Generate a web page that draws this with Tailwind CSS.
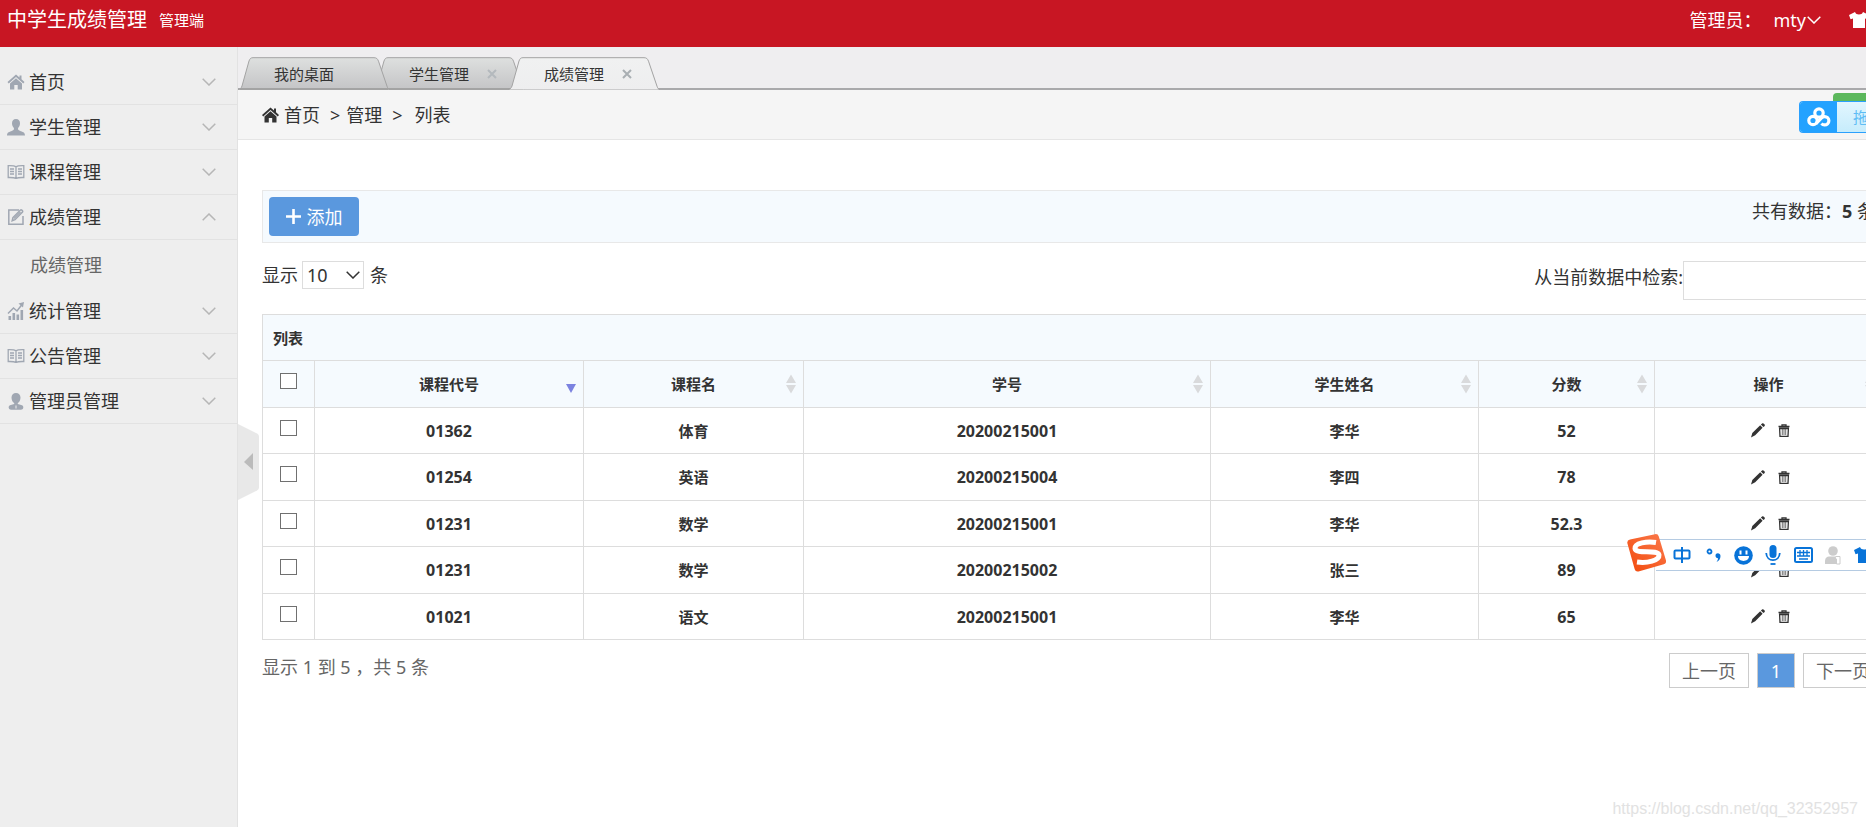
<!DOCTYPE html>
<html lang="zh-CN">
<head>
<meta charset="utf-8">
<title>中学生成绩管理</title>
<script src="https://cdn.jsdelivr.net/npm/@tailwindcss/browser@4"></script>
</head>
<body class="relative h-screen overflow-hidden bg-white font-['Noto_Sans','Noto_Sans_CJK_SC',sans-serif] text-[18px] leading-6 text-[#333]">
<svg class="absolute h-0 w-0" aria-hidden="true">
  <defs>
    <linearGradient id="tab-off" x1="0" y1="0" x2="0" y2="1"><stop offset="0" stop-color="#dee0df"/><stop offset="1" stop-color="#c4c4c6"/></linearGradient>
    <linearGradient id="tab-on" x1="0" y1="0" x2="0" y2="1"><stop offset="0" stop-color="#f0f1f1"/><stop offset="1" stop-color="#eeeeef"/></linearGradient>
    <linearGradient id="logo-fill" x1="1" y1="0" x2="0" y2="1"><stop offset="0" stop-color="#fb7a4c"/><stop offset="1" stop-color="#f24a0c"/></linearGradient>
    <symbol id="home" viewBox="0 0 17 16"><path d="M8.500.5 0 8l1.200 1.400L8.500 3l7.300 6.400L17 8l-3-2.700V1.500h-2v2.100z" fill="currentColor"/><path d="M8.500 4.300 2.500 9.600V15.500H6.800V11H10.200V15.500H14.500V9.600z" fill="currentColor"/></symbol>
    <symbol id="user" viewBox="0 0 18 17"><path d="M9 0C6.300 0 5 1.900 5 4.300c0 2 .8 3.600 1.900 4.600.3 1.500-.2 2.100-1.800 2.800C2.500 12.800 0 13.200 0 16.500h18c0-3.300-2.500-3.700-5.100-4.800-1.600-.7-2.100-1.300-1.800-2.800C12.200 7.900 13 6.300 13 4.300 13 1.900 11.700 0 9 0z" fill="currentColor"/></symbol>
    <symbol id="admin" viewBox="0 0 18 17"><path d="M9 0C6.300 0 4.500 1.900 4.500 4.600c0 2.500 1.200 4.900 2.700 5.500v1L3 12.300c-1.200.5-1.600 1.700-1.200 2.800.3 1 1 1.600 2.200 1.600h10c1.200 0 1.900-.6 2.200-1.600.4-1.100 0-2.300-1.200-2.800l-4.200-1.200v-1c1.500-.6 2.700-3 2.700-5.500C13.500 1.900 11.700 0 9 0z" fill="currentColor"/><path d="M8.500 12.500h1v3h-1z" fill="#eee"/></symbol>
    <symbol id="book" viewBox="0 0 17 14"><path d="M8.500 1.800C6.800.5 4 .6.700.7v11.800c3.300-.1 6.100-.1 7.800 1 1.700-1.100 4.500-1.100 7.800-1V.7C13 .6 10.200.5 8.500 1.800zM8.500 2v11M2.500 4h4M2.500 6.500h4M2.500 9h4M10.500 4h4M10.500 6.500h4M10.500 9h4" fill="none" stroke="currentColor" stroke-width="1.300"/></symbol>
    <symbol id="edit" viewBox="0 0 16 16"><path d="M11 1H.8v14.200h14.200V7" fill="none" stroke="currentColor" stroke-width="1.500"/><path d="M5 8.500 12.500 1c.8-.7 2.700 1 2 2L7 10.700l-2.800 1z" fill="none" stroke="currentColor" stroke-width="1.500"/><path d="M6 9.500 12.500 3" stroke="currentColor" stroke-width="1.200"/></symbol>
    <symbol id="chart" viewBox="0 0 17 18"><path d="M1 14h2.600v4H1zM5 11h2.600v7H5zM9 12.500h2.600V18H9zM13 8h2.600v10H13z" fill="currentColor"/><path d="M.5 11.500 6 6l3.500 3L14.500 2.500" fill="none" stroke="currentColor" stroke-width="1.500"/><path d="M11 1.500 16.500 0l-1 5.500z" fill="currentColor"/></symbol>
    <symbol id="down" viewBox="0 0 14 8"><path d="m.7.700 6.300 6.300 6.300-6.300" fill="none" stroke="currentColor" stroke-width="1.500"/></symbol>
    <symbol id="shirt" viewBox="0 0 20 16"><path d="M6 0 0 3l1.500 4.200L4 6.500V16h12V6.500l2.500.7L20 3l-6-3c-.8 1.800-2 2.500-4 2.500S6.800 1.800 6 0z" fill="currentColor"/></symbol>
    <symbol id="close" viewBox="0 0 10 10"><path d="m1 1 8 8m0-8L1 9" stroke="currentColor" stroke-width="2"/></symbol>
    <symbol id="sort" viewBox="0 0 10 20"><path d="M5 .5 10 9H0zM0 11h10l-5 8.500z" fill="#d9dadc"/></symbol>
    <symbol id="pencil" viewBox="0 0 14 15"><path d="M0 14.500 1.300 10 9.200 2.200l2.400 2.500L4.200 12.300zM9.900 1.500l1.200-1.100c1.200-.8 3.300 1.100 2.600 2.500l-1.300 1.200z" fill="currentColor"/></symbol>
    <symbol id="trash" viewBox="0 0 12 13"><path d="M.5 2.500h11M4 2V.8h4V2M1.600 4.500l.4 7.800h8l.4-7.800z" fill="none" stroke="currentColor" stroke-width="1.300"/><path d="M1 3.700h10M4.300 5v6M6 5v6M7.700 5v6" fill="none" stroke="currentColor" stroke-width=".7"/></symbol>
    <symbol id="tab-shape" viewBox="0 0 152 33"><path d="M0 32.500c2 0 3-1 4-3.500L11 4C12 1.500 12.800.7 15 .7h121c2.500 0 3.500 1 4.500 3.500l8.500 25c.8 2.300 1.500 3.300 3 3.300"/></symbol>
  </defs>
</svg>

<div class="flex h-full w-[calc(100%+40px)] flex-col">
  <header class="flex h-[47px] shrink-0 items-start bg-[#c81623] pt-2 pl-[7px] text-white">
    <h1 class="text-[20px]">中学生成绩管理</h1>
    <span class="ml-3 text-[15px]">管理端</span>
    <div class="ml-auto flex items-center pr-[37px]">
      <span>管理员：</span>
      <button type="button" class="ml-3 flex items-center gap-px">mty<svg class="h-2 w-3.5"><use href="#down"/></svg></button>
      <button type="button" aria-label="换肤" class="ml-7"><svg class="h-4 w-5"><use href="#shirt"/></svg></button>
    </div>
  </header>

  <div class="flex min-h-0 flex-1">
    <aside class="w-[238px] shrink-0 border-r border-[#e2e2e2] bg-[#eee] pt-[13px]">
      <nav>
        <button type="button" class="flex h-[45px] w-full items-center border-b border-[#e2e2e2] pr-[21px] pl-[7px]"><svg class="mr-1 h-4 w-[18px] text-[#a0a7b2]"><use href="#home"/></svg>首页<svg class="ml-auto h-2 w-3.5 text-[#b6b6b6]"><use href="#down"/></svg></button>
        <button type="button" class="flex h-[45px] w-full items-center border-b border-[#e2e2e2] pr-[21px] pl-[7px]"><svg class="mr-1 h-[17px] w-[18px] text-[#a0a7b2]"><use href="#user"/></svg>学生管理<svg class="ml-auto h-2 w-3.5 text-[#b6b6b6]"><use href="#down"/></svg></button>
        <button type="button" class="flex h-[45px] w-full items-center border-b border-[#e2e2e2] pr-[21px] pl-[7px]"><svg class="mr-1 h-3.5 w-[18px] text-[#a0a7b2]"><use href="#book"/></svg>课程管理<svg class="ml-auto h-2 w-3.5 text-[#b6b6b6]"><use href="#down"/></svg></button>
        <button type="button" aria-expanded="true" class="flex h-[45px] w-full items-center border-b border-[#e2e2e2] pr-[21px] pl-[7px]"><svg class="mr-1 h-4 w-[18px] text-[#a0a7b2]"><use href="#edit"/></svg>成绩管理<svg class="ml-auto h-2 w-3.5 rotate-180 text-[#b6b6b6]"><use href="#down"/></svg></button>
        <a href="#" class="flex h-[49px] items-center pl-[30px] text-[#666]">成绩管理</a>
        <button type="button" class="flex h-[45px] w-full items-center border-b border-[#e2e2e2] pr-[21px] pl-[7px]"><svg class="mr-1 h-[18px] w-[18px] text-[#a0a7b2]"><use href="#chart"/></svg>统计管理<svg class="ml-auto h-2 w-3.5 text-[#b6b6b6]"><use href="#down"/></svg></button>
        <button type="button" class="flex h-[45px] w-full items-center border-b border-[#e2e2e2] pr-[21px] pl-[7px]"><svg class="mr-1 h-3.5 w-[18px] text-[#a0a7b2]"><use href="#book"/></svg>公告管理<svg class="ml-auto h-2 w-3.5 text-[#b6b6b6]"><use href="#down"/></svg></button>
        <button type="button" class="flex h-[45px] w-full items-center border-b border-[#e2e2e2] pr-[21px] pl-[7px]"><svg class="mr-1 h-[17px] w-[18px] text-[#a0a7b2]"><use href="#admin"/></svg>管理员管理<svg class="ml-auto h-2 w-3.5 text-[#b6b6b6]"><use href="#down"/></svg></button>
      </nav>
    </aside>

    <main class="min-w-0 flex-1">
      <div class="h-[43px] border-b-2 border-[#a9a9ab] bg-[#efeef0] pt-[10px]">
        <ul class="flex text-[15px]">
          <li class="relative z-10 h-[33px] w-[152px]"><svg class="absolute inset-0 h-full w-full fill-[url(#tab-off)] stroke-[#a3a3a3]"><use href="#tab-shape"/><path d="M2 32h148" stroke-width="2"/></svg><a href="#" class="relative flex h-full items-center pl-9">我的桌面</a></li>
          <li class="relative -ml-[17px] h-[33px] w-[152px]"><svg class="absolute inset-0 h-full w-full fill-[url(#tab-off)] stroke-[#a3a3a3]"><use href="#tab-shape"/><path d="M2 32h148" stroke-width="2"/></svg><div class="relative flex h-full items-center pl-9"><a href="#">学生管理</a><button type="button" aria-label="关闭" class="ml-[18px] text-[#b4b9bd]"><svg class="h-2.5 w-2.5"><use href="#close"/></svg></button></div></li>
          <li class="relative z-20 -ml-[17px] h-[33px] w-[152px]"><svg class="absolute inset-0 h-full w-full fill-[url(#tab-on)] stroke-[#a3a3a3]"><use href="#tab-shape"/></svg><div class="relative flex h-full items-center pl-9"><a href="#">成绩管理</a><button type="button" aria-label="关闭" class="ml-[18px] text-[#a9afb3]"><svg class="h-2.5 w-2.5"><use href="#close"/></svg></button></div></li>
        </ul>
      </div>

      <nav class="flex h-[50px] items-center border-b border-[#e5e5e5] bg-[#f5f5f5] pl-6">
        <svg class="mr-[5px] h-4 w-[17px]"><use href="#home"/></svg>
        <a href="#">首页</a><span class="ml-2.5">&gt;</span><span class="ml-1.5">管理</span><span class="ml-2.5">&gt;</span><span class="ml-3">列表</span>
      </nav>

      <div class="px-6 pt-[50px]">
        <div class="flex h-[53px] items-start justify-between border border-[#e8e8e8] bg-[#f5fafe] p-1.5">
          <button type="button" class="flex h-[39px] w-[90px] items-center justify-center gap-1.5 rounded bg-[#5a98de] text-white"><svg class="h-[15px] w-[15px]" viewBox="0 0 15 15"><path d="M7.500 0v15M0 7.500h15" stroke="currentColor" stroke-width="2.600"/></svg>添加</button>
          <span class="pt-0.5">共有数据：<strong>5</strong> 条</span>
        </div>

        <div class="mt-[18px] flex items-start justify-between">
          <label class="flex h-7 items-center">显示
            <span class="relative mr-1.5 ml-1 block">
              <select class="block h-7 w-[62px] appearance-none border border-[#ddd] bg-white pl-1 leading-6"><option>10</option><option>25</option><option>50</option></select>
              <svg class="pointer-events-none absolute top-2.5 right-1 h-2 w-3.5"><use href="#down"/></svg>
            </span>条</label>
          <label class="flex items-start"><span class="pt-1">从当前数据中检索:</span><input type="search" class="h-[39px] w-[199px] border border-[#ddd] bg-white"></label>
        </div>

        <table class="mt-3.5 w-full table-fixed border-collapse text-center text-[15px] font-bold">
          <colgroup><col class="w-[52px]"><col class="w-[269px]"><col class="w-[220px]"><col class="w-[407px]"><col class="w-[268px]"><col class="w-[176px]"><col class="w-[228px]"></colgroup>
          <thead class="bg-[#f5fafe]">
            <tr class="h-[46px]"><th colspan="7" class="border border-[#ddd] pl-2.5 text-left">列表</th></tr>
            <tr class="h-[47px]">
              <th class="border border-[#ddd] pb-1.5"><input type="checkbox" aria-label="全选" class="mx-auto block h-4 w-[17px] appearance-none border border-[#707070] bg-white"></th>
              <th class="relative border border-[#ddd]"><button type="button" class="font-bold">课程代号</button><svg class="absolute right-[7px] bottom-3.5 h-[9px] w-2.5" viewBox="0 0 10 9"><path d="M0 0h10L5 9z" fill="#7b82e0"/></svg></th>
              <th class="relative border border-[#ddd]"><button type="button" class="font-bold">课程名</button><svg class="absolute top-[13px] right-[7px] h-5 w-2.5"><use href="#sort"/></svg></th>
              <th class="relative border border-[#ddd]"><button type="button" class="font-bold">学号</button><svg class="absolute top-[13px] right-[7px] h-5 w-2.5"><use href="#sort"/></svg></th>
              <th class="relative border border-[#ddd]"><button type="button" class="font-bold">学生姓名</button><svg class="absolute top-[13px] right-[7px] h-5 w-2.5"><use href="#sort"/></svg></th>
              <th class="relative border border-[#ddd]"><button type="button" class="font-bold">分数</button><svg class="absolute top-[13px] right-[7px] h-5 w-2.5"><use href="#sort"/></svg></th>
              <th class="relative border border-[#ddd]"><button type="button" class="font-bold">操作</button><svg class="absolute top-[13px] right-[7px] h-5 w-2.5"><use href="#sort"/></svg></th>
            </tr>
          </thead>
          <tbody>
            <tr class="odd:h-[46px] even:h-[47px]">
              <td class="border border-[#ddd] pb-1.5"><input type="checkbox" aria-label="选择" class="mx-auto block h-4 w-[17px] appearance-none border border-[#707070] bg-white"></td>
              <td class="border border-[#ddd] text-[16px]">01362</td><td class="border border-[#ddd]">体育</td><td class="border border-[#ddd] text-[16px]">20200215001</td><td class="border border-[#ddd]">李华</td><td class="border border-[#ddd] text-[16px]">52</td>
              <td class="border border-[#ddd]"><div class="flex items-center justify-center gap-[13px] pl-1"><button type="button" aria-label="编辑"><svg class="h-[15px] w-3.5"><use href="#pencil"/></svg></button><button type="button" aria-label="删除"><svg class="h-[13px] w-3"><use href="#trash"/></svg></button></div></td>
            </tr>
            <tr class="odd:h-[46px] even:h-[47px]">
              <td class="border border-[#ddd] pb-1.5"><input type="checkbox" aria-label="选择" class="mx-auto block h-4 w-[17px] appearance-none border border-[#707070] bg-white"></td>
              <td class="border border-[#ddd] text-[16px]">01254</td><td class="border border-[#ddd]">英语</td><td class="border border-[#ddd] text-[16px]">20200215004</td><td class="border border-[#ddd]">李四</td><td class="border border-[#ddd] text-[16px]">78</td>
              <td class="border border-[#ddd]"><div class="flex items-center justify-center gap-[13px] pl-1"><button type="button" aria-label="编辑"><svg class="h-[15px] w-3.5"><use href="#pencil"/></svg></button><button type="button" aria-label="删除"><svg class="h-[13px] w-3"><use href="#trash"/></svg></button></div></td>
            </tr>
            <tr class="odd:h-[46px] even:h-[47px]">
              <td class="border border-[#ddd] pb-1.5"><input type="checkbox" aria-label="选择" class="mx-auto block h-4 w-[17px] appearance-none border border-[#707070] bg-white"></td>
              <td class="border border-[#ddd] text-[16px]">01231</td><td class="border border-[#ddd]">数学</td><td class="border border-[#ddd] text-[16px]">20200215001</td><td class="border border-[#ddd]">李华</td><td class="border border-[#ddd] text-[16px]">52.3</td>
              <td class="border border-[#ddd]"><div class="flex items-center justify-center gap-[13px] pl-1"><button type="button" aria-label="编辑"><svg class="h-[15px] w-3.5"><use href="#pencil"/></svg></button><button type="button" aria-label="删除"><svg class="h-[13px] w-3"><use href="#trash"/></svg></button></div></td>
            </tr>
            <tr class="odd:h-[46px] even:h-[47px]">
              <td class="border border-[#ddd] pb-1.5"><input type="checkbox" aria-label="选择" class="mx-auto block h-4 w-[17px] appearance-none border border-[#707070] bg-white"></td>
              <td class="border border-[#ddd] text-[16px]">01231</td><td class="border border-[#ddd]">数学</td><td class="border border-[#ddd] text-[16px]">20200215002</td><td class="border border-[#ddd]">张三</td><td class="border border-[#ddd] text-[16px]">89</td>
              <td class="border border-[#ddd]"><div class="flex items-center justify-center gap-[13px] pl-1"><button type="button" aria-label="编辑"><svg class="h-[15px] w-3.5"><use href="#pencil"/></svg></button><button type="button" aria-label="删除"><svg class="h-[13px] w-3"><use href="#trash"/></svg></button></div></td>
            </tr>
            <tr class="odd:h-[46px] even:h-[47px]">
              <td class="border border-[#ddd] pb-1.5"><input type="checkbox" aria-label="选择" class="mx-auto block h-4 w-[17px] appearance-none border border-[#707070] bg-white"></td>
              <td class="border border-[#ddd] text-[16px]">01021</td><td class="border border-[#ddd]">语文</td><td class="border border-[#ddd] text-[16px]">20200215001</td><td class="border border-[#ddd]">李华</td><td class="border border-[#ddd] text-[16px]">65</td>
              <td class="border border-[#ddd]"><div class="flex items-center justify-center gap-[13px] pl-1"><button type="button" aria-label="编辑"><svg class="h-[15px] w-3.5"><use href="#pencil"/></svg></button><button type="button" aria-label="删除"><svg class="h-[13px] w-3"><use href="#trash"/></svg></button></div></td>
            </tr>
          </tbody>
        </table>

        <div class="mt-[13px] flex items-start justify-between text-[#666]">
          <span class="pt-0.5">显示 1 到 5 ，共 5 条</span>
          <div class="-mr-px flex gap-2">
            <button type="button" class="h-[35px] w-20 border border-[#ccc]">上一页</button>
            <button type="button" class="h-[35px] w-[38px] border border-[#ccc] bg-[#5a98de] text-white">1</button>
            <button type="button" class="h-[35px] w-20 border border-[#ccc]">下一页</button>
          </div>
        </div>
      </div>
    </main>
  </div>
</div>

<!-- sidebar collapse handle -->
<button type="button" aria-label="收起" class="absolute top-[424px] left-[238px]"><svg class="h-[76px] w-[21px]" viewBox="0 0 21 76"><path d="M0 0 19 9.500q2 1 2 3v51q0 2-2 3L0 76z" fill="#e8e8e8"/><path d="m6 38 9-9v17z" fill="#bbb"/></svg></button>

<!-- floating upload widget -->
<div class="absolute top-[93px] right-0 h-8 w-[33px] rounded-tl bg-[#5cb85c]"></div>
<div class="absolute top-[101px] right-0 flex h-8 w-[67px] overflow-hidden rounded-l border border-r-0 border-[#2aa0fd] bg-linear-to-b from-[#e2f6fe] to-[#c6ecfc]">
  <div class="flex w-[37px] shrink-0 items-center justify-center bg-[#23a2ff] text-white"><svg class="h-5 w-6" viewBox="0 0 24 20" fill="none" stroke="currentColor" stroke-width="3.200"><circle cx="12" cy="6" r="4.200"/><circle cx="6" cy="13.500" r="4.200"/><path d="M9 16.500 14.500 11a4.200 4.200 0 1 1 0 5.500"/></svg></div>
  <span class="shrink-0 self-center pl-4 text-[15px] text-[#5fbdf5]">拖</span>
</div>

<!-- input method bar -->
<div class="absolute top-[534px] right-0 h-[38px] w-[239px] text-[#0873d8]">
  <div class="absolute top-[5px] right-0 flex h-8 w-[210px] items-center overflow-hidden border-y border-[#b5cbe2] bg-white pl-[17px]">
    <svg class="h-[18px] w-[18px] shrink-0" viewBox="0 0 18 18" fill="none" stroke="currentColor" stroke-width="2"><path d="M9 1v16"/><rect x="1.500" y="4.500" width="15" height="8" rx="1"/></svg>
    <svg class="ml-[15px] h-[18px] w-[15px] shrink-0" viewBox="0 0 15 18"><circle cx="3.500" cy="5.500" r="2" fill="none" stroke="currentColor" stroke-width="1.800"/><path d="M9.500 9.500c0-3 5-3 5 .5 0 3-1.500 5-4 6 1-1.500 1.500-2.500 1.500-3.700-1.500 0-2.500-1-2.500-2.800z" fill="currentColor"/></svg>
    <svg class="ml-[13px] h-[19px] w-[19px] shrink-0" viewBox="0 0 19 19"><circle cx="9.500" cy="9.500" r="9.300" fill="currentColor"/><path d="M6.500 4.500v4M12.500 4.500v4" stroke="#fff" stroke-width="2"/><path d="M4 10h11c0 6.500-11 6.500-11 0z" fill="#fff"/></svg>
    <svg class="ml-[12px] h-5 w-4 shrink-0" viewBox="0 0 16 20"><rect x="4.500" y="0" width="7" height="13" rx="3.500" fill="currentColor"/><path d="M1.200 8c.5 9.500 13 9.500 13.600 0" fill="none" stroke="currentColor" stroke-width="1.800"/><path d="M5.500 19h5" stroke="currentColor" stroke-width="1.800"/></svg>
    <svg class="ml-[13px] h-4 w-[19px] shrink-0" viewBox="0 0 19 16" fill="none" stroke="currentColor"><rect x="1" y="1" width="17" height="14" rx="1.500" stroke-width="2"/><path d="M3 5.500h13M3 9h13M5 12h9M6 3v6M9.500 3v6M13 3v6" stroke-width="1.300"/></svg>
    <svg class="ml-[12px] h-[19px] w-4 shrink-0" viewBox="0 0 16 19"><circle cx="8" cy="5" r="4.800" fill="#ccc"/><path d="M0 18v-3.500C.5 11.500 2 10.500 4 10.500h8c2 0 3 1 3 3V18z" fill="#ccc"/><path d="M10.500 10.500h4.500v7.500h-3.500v-5" fill="#fff" stroke="#ccc"/></svg>
    <svg class="ml-[13px] h-4 w-5 shrink-0"><use href="#shirt"/></svg>
  </div>
  <svg class="absolute top-0 left-0 h-[38px] w-[39px]" viewBox="0 0 39 38"><path d="M3 5.500 28 .2q3-.5 3.800 2.300L39 26.500q.5 3-2.200 3.800L11.500 37.500q-3 .6-3.800-2.200L.3 9Q0 6.200 3 5.500z" fill="url(#logo-fill)"/><path d="M29 8.500C20 7 7.500 9 8 14.500 8.500 20.500 31 15 32 21 32.500 26.500 20 29.500 10 28" fill="none" stroke="#fff" stroke-width="5"/></svg>
</div>

<div class="absolute right-2 bottom-1.5 font-['Liberation_Sans',sans-serif] text-[16px] text-[#e2e2e2]">https://blog.csdn.net/qq_32352957</div>
</body>
</html>
